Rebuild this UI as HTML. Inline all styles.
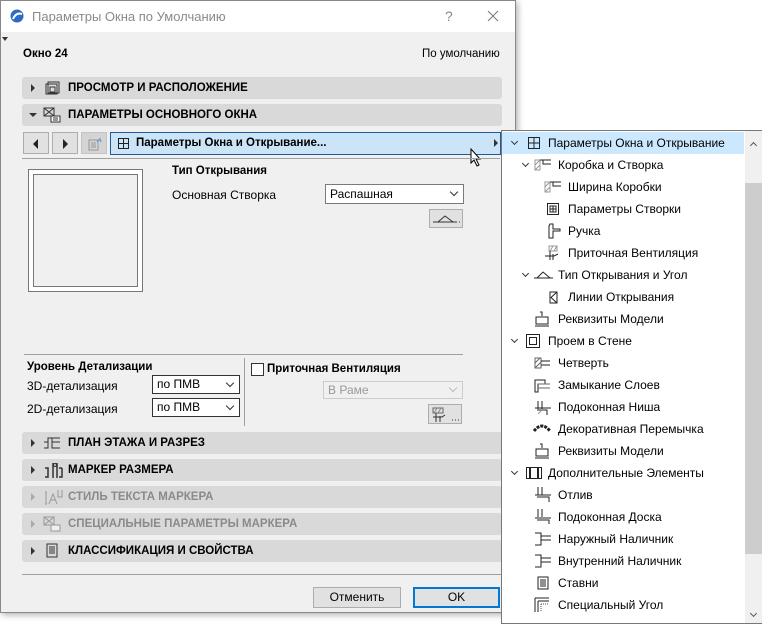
<!DOCTYPE html>
<html><head><meta charset="utf-8"><style>
*{box-sizing:border-box;margin:0;padding:0}
body{width:762px;height:624px;background:#fff;font-family:"Liberation Sans",sans-serif;font-size:12px;color:#000;position:relative;overflow:hidden}
.a{position:absolute}
#dlg{left:0;top:0;width:516px;height:613px;background:#f0f0f0;border:1px solid #888;box-shadow:2px 2px 6px rgba(0,0,0,.3)}
#title{left:0;top:0;width:514px;height:31px;background:#fff}
.bar{left:21px;width:480px;height:22px;background:#d9d9d9;border-radius:3px;font-weight:bold;font-size:11.5px;line-height:22px}
.bar .t{position:absolute;left:46px;top:0}
.bar .tri{position:absolute;left:9px;top:7px;width:0;height:0;border-left:4px solid #333;border-top:4px solid transparent;border-bottom:4px solid transparent}
.bar.dis{color:#8a8a8a}
.bar.dis .tri{border-left-color:#aaa}
.btn{background:#e1e1e1;border:1px solid #adadad}
.sel{background:#fff;border:1px solid #7a7a7a;height:21px;line-height:19px;padding-left:4px}
.chev{position:absolute;right:6px;top:5px;width:6px;height:6px;border-right:1px solid #333;border-bottom:1px solid #333;transform:rotate(45deg)}
#pop{left:501px;top:130px;width:261px;height:494px;background:#fff;border:1px solid #777}
.r{position:absolute;height:22px;line-height:22px;white-space:nowrap}
.ic{position:absolute;top:5px}
.ex{position:absolute;top:7px;width:5px;height:5px;border-right:1.3px solid #333;border-bottom:1.3px solid #333;transform:rotate(45deg)}
</style></head><body>
<div class="a" id="dlg">
 <div class="a" id="title"></div>
 <svg class="a" style="left:9px;top:8px" width="14" height="14"><circle cx="7" cy="7" r="6.5" fill="#2d6bc4"/><path d="M3 10 Q6 3 12 5" stroke="#fff" stroke-width="2" fill="none"/></svg>
 <div class="a" style="left:31px;top:8px;font-size:13px;color:#8a8a8a">Параметры Окна по Умолчанию</div>
 <div class="a" style="left:444px;top:7px;font-size:14px;color:#888">?</div>
 <svg class="a" style="left:486px;top:9px" width="12" height="12"><path d="M1 1L11 11M11 1L1 11" stroke="#777" stroke-width="1"/></svg>
 <div class="a" style="left:1px;top:36px;width:0;height:0;border-top:4px solid #333;border-left:3px solid transparent;border-right:3px solid transparent"></div>
 <div class="a" style="left:22px;top:47px;font-weight:bold;font-size:11.5px">Окно 24</div>
 <div class="a" style="left:421px;top:47px;font-size:11.5px">По умолчанию</div>

 <div class="a bar" style="top:76px"><span class="tri"></span><svg class="a" style="left:23px;top:4px" width="15" height="14"><rect x="3" y="1" width="11" height="11" fill="none" stroke="#333"/><rect x="1" y="3" width="11" height="10" fill="none" stroke="#333"/><rect x="5" y="6" width="5" height="5" fill="none" stroke="#333"/></svg><span class="t">ПРОСМОТР И РАСПОЛОЖЕНИЕ</span></div>
 <div class="a bar" style="top:103px"><span class="tri" style="left:7px;top:9px;border-left:4px solid transparent;border-right:4px solid transparent;border-top:4px solid #333;border-bottom:0"></span><svg class="a" style="left:21px;top:3px" width="18" height="16"><rect x="1" y="1" width="10" height="8" fill="none" stroke="#333"/><path d="M1 1L11 9M11 1L1 9" stroke="#333"/><rect x="8" y="9" width="9" height="6" fill="#fff" stroke="#333"/><path d="M10 11h5M10 13h5" stroke="#333"/></svg><span class="t">ПАРАМЕТРЫ ОСНОВНОГО ОКНА</span></div>

 <div class="a btn" style="left:22px;top:131px;width:26px;height:22px"><div class="a" style="left:9px;top:6px;border-right:5px solid #222;border-top:5px solid transparent;border-bottom:5px solid transparent"></div></div>
 <div class="a btn" style="left:51px;top:131px;width:26px;height:22px"><div class="a" style="left:10px;top:6px;border-left:5px solid #222;border-top:5px solid transparent;border-bottom:5px solid transparent"></div></div>
 <div class="a btn" style="left:80px;top:131px;width:26px;height:22px;background:#d4d4d4;border-color:#c4c4c4"><svg class="a" style="left:5px;top:3px" width="16" height="16"><rect x="2" y="4" width="9" height="10" fill="none" stroke="#999"/><path d="M4 7h5M4 9h5M4 11h5" stroke="#999"/><path d="M10 6l3-3 1 3" stroke="#6ea0d8" fill="none" stroke-width="1.5"/></svg></div>
 <div class="a" style="left:109px;top:131px;width:391px;height:23px;background:#cce4f7;border:1px solid #1f5a9c"><svg class="a" style="left:7px;top:5px" width="11" height="11"><rect x=".5" y=".5" width="10" height="10" fill="none" stroke="#222"/><path d="M5.5 0v11M0 5.5h11" stroke="#222"/></svg><div class="a" style="left:25px;top:4px;font-weight:bold;font-size:11.5px">Параметры Окна и Открывание...</div><div class="a" style="left:383px;top:6px;border-left:4px solid #333;border-top:4px solid transparent;border-bottom:4px solid transparent"></div></div>
 <svg class="a" style="left:469px;top:147px" width="14" height="20"><path d="M1 1v14l3-3 3 6 2-1-3-6h4z" fill="#fff" stroke="#000"/></svg>
 <div class="a" style="left:21px;top:157px;width:478px;height:1px;background:#a0a0a0"></div>

 <div class="a" style="left:27px;top:168px;width:115px;height:123px;border:1px solid #777;background:#fff"><div class="a" style="left:4px;top:4px;width:105px;height:113px;border:1px solid #777;background:#f0f0f0"></div></div>
 <div class="a" style="left:171px;top:164px;font-weight:bold;font-size:11.5px">Тип Открывания</div>
 <div class="a" style="left:171px;top:187px">Основная Створка</div>
 <div class="a sel" style="left:324px;top:183px;width:139px;height:20px;line-height:18px">Распашная<span class="chev" style="top:4px"></span></div>
 <div class="a btn" style="left:428px;top:208px;width:34px;height:19px"><svg class="a" style="left:2px;top:3px" width="30" height="12"><path d="M1 9h5M6 9l7-6 8 6h-15M21 9h3" stroke="#333" fill="none"/><path d="M24 9h1M27 9h1M30 9h1" stroke="#333"/></svg></div>

 <div class="a" style="left:23px;top:353px;width:439px;height:1px;background:#a0a0a0"></div>
 <div class="a" style="left:243px;top:357px;width:1px;height:68px;background:#a0a0a0"></div>
 <div class="a" style="left:26px;top:360px;font-weight:bold;font-size:11.5px">Уровень Детализации</div>
 <div class="a" style="left:26px;top:378px">3D-детализация</div>
 <div class="a" style="left:26px;top:401px">2D-детализация</div>
 <div class="a sel" style="left:151px;top:374px;width:88px;height:19px;line-height:17px;border-color:#333">по ПМВ<span class="chev" style="top:4px"></span></div>
 <div class="a sel" style="left:151px;top:397px;width:88px;height:19px;line-height:17px;border-color:#333">по ПМВ<span class="chev" style="top:4px"></span></div>
 <div class="a" style="left:250px;top:362px;width:13px;height:13px;background:#fff;border:1px solid #333"></div>
 <div class="a" style="left:266px;top:362px;font-weight:bold;font-size:11.5px">Приточная Вентиляция</div>
 <div class="a sel" style="left:322px;top:380px;width:140px;height:18px;line-height:16px;border-color:#ccc;color:#999;background:#f0f0f0">В Раме<span class="chev" style="border-color:#bbb;top:3px"></span></div>
 <div class="a btn" style="left:427px;top:403px;width:34px;height:20px"><svg class="a" style="left:2px;top:2px" width="30" height="16"><rect x="2" y="1" width="10" height="5" fill="none" stroke="#666"/><path d="M3 6l3-5M7 6l3-5" stroke="#888"/><path d="M5 6v9M9 9v6M2 10h9l3-2" stroke="#333" fill="none"/><path d="M21 13h1M24 13h1M27 13h1" stroke="#333"/></svg></div>

 <div class="a bar" style="top:431px"><span class="tri"></span><svg class="a" style="left:21px;top:4px" width="18" height="14"><path d="M1 12h4v-10h12M9 2v10h8M9 6h8M1 6h4" stroke="#333" fill="none"/></svg><span class="t">ПЛАН ЭТАЖА И РАЗРЕЗ</span></div>
 <div class="a bar" style="top:458px"><span class="tri"></span><svg class="a" style="left:21px;top:3px" width="20" height="16"><path d="M2 6h3v9H2M10 1v15M14 1v15M16 6h3M16 15h3v-9" stroke="#333" fill="none" stroke-width="1.5"/><circle cx="12" cy="3" r="1.5" fill="none" stroke="#333"/></svg><span class="t">МАРКЕР РАЗМЕРА</span></div>
 <div class="a bar dis" style="top:485px"><span class="tri"></span><svg class="a" style="left:21px;top:3px" width="20" height="16"><path d="M2 3h2M3 3v12M2 15h2M6 15l4-10 4 10M8 11h4M15 1v7h4V1" stroke="#999" fill="none"/></svg><span class="t">СТИЛЬ ТЕКСТА МАРКЕРА</span></div>
 <div class="a bar dis" style="top:512px"><span class="tri"></span><svg class="a" style="left:21px;top:3px" width="18" height="16"><rect x="1" y="1" width="10" height="8" fill="none" stroke="#999"/><path d="M1 1L11 9M11 1L1 9" stroke="#999"/><rect x="8" y="9" width="9" height="6" fill="#f0f0f0" stroke="#999"/></svg><span class="t">СПЕЦИАЛЬНЫЕ ПАРАМЕТРЫ МАРКЕРА</span></div>
 <div class="a bar" style="top:539px"><span class="tri"></span><svg class="a" style="left:24px;top:3px" width="14" height="16"><rect x="1" y="1" width="10" height="13" fill="none" stroke="#333"/><path d="M3 4h6M3 6h6M3 8h6M3 10h6" stroke="#333"/></svg><span class="t">КЛАССИФИКАЦИЯ И СВОЙСТВА</span></div>

 <div class="a" style="left:21px;top:573px;width:479px;height:1px;background:#a0a0a0"></div>
 <div class="a btn" style="left:312px;top:586px;width:88px;height:21px;text-align:center;line-height:19px">Отменить</div>
 <div class="a btn" style="left:412px;top:586px;width:87px;height:21px;text-align:center;line-height:17px;border:2px solid #0078d7">OK</div>
</div>

<div class="a" id="pop">
 <div class="a" style="left:0;top:1px;width:242px;height:22px;background:#cce8ff"></div>
 <div class="a" style="left:243px;top:0;width:17px;height:492px;background:#f0f0f0"></div>
 <div class="a" style="left:243px;top:52px;width:17px;height:371px;background:#cdcdcd"></div>
 <div class="a" style="left:249px;top:12px;width:5px;height:5px;border-left:1.3px solid #555;border-top:1.3px solid #555;transform:rotate(45deg)"></div>
 <div class="a" style="left:249px;top:480px;width:5px;height:5px;border-right:1.3px solid #555;border-bottom:1.3px solid #555;transform:rotate(45deg)"></div>

 <div class="r" style="top:1px;left:0"><span class="ex" style="left:10px"></span><svg class="ic" style="left:26px" width="12" height="12"><rect x=".5" y=".5" width="11" height="11" fill="none" stroke="#222"/><path d="M6 0v12M0 6h12" stroke="#222"/></svg><span style="position:absolute;left:46px">Параметры Окна и Открывание</span></div>
 <div class="r" style="top:23px"><span class="ex" style="left:21px"></span><svg class="ic" style="left:32px" width="18" height="12"><rect x="1" y="1" width="5" height="10" fill="none" stroke="#999"/><path d="M1 6l5-5M1 11l5-5" stroke="#999"/><path d="M6 1h3v4h8M9 1h8" stroke="#222" fill="none"/></svg><span style="position:absolute;left:56px">Коробка и Створка</span></div>
 <div class="r" style="top:45px"><svg class="ic" style="left:42px" width="18" height="12"><rect x="1" y="1" width="5" height="10" fill="none" stroke="#999"/><path d="M1 6l5-5M1 11l5-5" stroke="#999"/><path d="M6 1h3v4h8M9 1h8" stroke="#222" fill="none"/></svg><span style="position:absolute;left:66px">Ширина Коробки</span></div>
 <div class="r" style="top:67px"><svg class="ic" style="left:45px" width="12" height="12"><rect x=".5" y=".5" width="11" height="11" fill="none" stroke="#222"/><rect x="3" y="3" width="6" height="6" fill="none" stroke="#222"/><path d="M6 3v6M3 6h6" stroke="#222"/></svg><span style="position:absolute;left:66px">Параметры Створки</span></div>
 <div class="r" style="top:89px"><svg class="ic" style="left:45px;top:3px" width="14" height="16"><path d="M3 1h3v5h7v2H6v7H2V3z" fill="none" stroke="#222"/></svg><span style="position:absolute;left:66px">Ручка</span></div>
 <div class="r" style="top:111px"><svg class="ic" style="left:42px;top:3px" width="16" height="16"><rect x="5" y="1" width="8" height="5" fill="none" stroke="#999"/><path d="M6 6l3-5M10 6l3-5" stroke="#999"/><path d="M6 6v9M9 9v6M1 11h9l4-2" stroke="#222" fill="none"/></svg><span style="position:absolute;left:66px">Приточная Вентиляция</span></div>
 <div class="r" style="top:133px"><span class="ex" style="left:21px"></span><svg class="ic" style="left:32px" width="20" height="12"><path d="M0 9h3M3 9l6-6 7 6H3M16 9h3" stroke="#222" fill="none"/></svg><span style="position:absolute;left:56px">Тип Открывания и Угол</span></div>
 <div class="r" style="top:155px"><svg class="ic" style="left:47px" width="10" height="13"><path d="M1 1h7v11H1zM8 1L2 6.5 8 12" stroke="#222" fill="none"/></svg><span style="position:absolute;left:66px">Линии Открывания</span></div>
 <div class="r" style="top:177px"><svg class="ic" style="left:32px;top:3px" width="16" height="16"><path d="M6 1h2v4M2 6h12v7H2zM1 15h14" stroke="#222" fill="none"/></svg><span style="position:absolute;left:56px">Реквизиты Модели</span></div>
 <div class="r" style="top:199px"><span class="ex" style="left:10px"></span><svg class="ic" style="left:24px;top:4px" width="14" height="14"><rect x=".5" y=".5" width="13" height="13" fill="none" stroke="#222"/><rect x="3.5" y="3.5" width="7" height="7" fill="none" stroke="#222"/></svg><span style="position:absolute;left:46px">Проем в Стене</span></div>
 <div class="r" style="top:221px"><svg class="ic" style="left:32px" width="18" height="12"><rect x="1" y="1" width="6" height="10" fill="none" stroke="#666"/><path d="M1 6l5-5M1 11l6-6" stroke="#666"/><path d="M7 4h9M7 8h9" stroke="#222"/></svg><span style="position:absolute;left:56px">Четверть</span></div>
 <div class="r" style="top:243px"><svg class="ic" style="left:32px" width="18" height="14"><path d="M1 1h10v4H4v8H1z" fill="none" stroke="#222"/><path d="M4 5h12M4 9h12" stroke="#666"/></svg><span style="position:absolute;left:56px">Замыкание Слоев</span></div>
 <div class="r" style="top:265px"><svg class="ic" style="left:32px" width="18" height="14"><path d="M4 0v8M8 0v8M1 7h16M3 9h10v5" stroke="#222" fill="none"/><path d="M4 13l4-4" stroke="#999"/></svg><span style="position:absolute;left:56px">Подоконная Ниша</span></div>
 <div class="r" style="top:287px"><svg class="ic" style="left:31px" width="18" height="10"><path d="M1 8Q9-2 17 8" stroke="#222" fill="none" stroke-width="3" stroke-dasharray="3 1"/></svg><span style="position:absolute;left:56px">Декоративная Перемычка</span></div>
 <div class="r" style="top:309px"><svg class="ic" style="left:32px;top:3px" width="16" height="16"><path d="M6 1h2v4M2 6h12v7H2zM1 15h14" stroke="#222" fill="none"/></svg><span style="position:absolute;left:56px">Реквизиты Модели</span></div>
 <div class="r" style="top:331px"><span class="ex" style="left:10px"></span><svg class="ic" style="left:24px" width="16" height="12"><rect x=".5" y=".5" width="15" height="11" fill="none" stroke="#222"/><path d="M4 0v12M12 0v12" stroke="#222" stroke-width="2"/></svg><span style="position:absolute;left:46px">Дополнительные Элементы</span></div>
 <div class="r" style="top:353px"><svg class="ic" style="left:32px;top:3px" width="18" height="16"><path d="M4 0v8M8 0v8M1 8h16M3 10h12v5" stroke="#222" fill="none"/></svg><span style="position:absolute;left:56px">Отлив</span></div>
 <div class="r" style="top:375px"><svg class="ic" style="left:32px;top:3px" width="18" height="16"><path d="M4 0v8M8 0v8M1 9h16M3 11h12v4" stroke="#222" fill="none"/></svg><span style="position:absolute;left:56px">Подоконная Доска</span></div>
 <div class="r" style="top:397px"><svg class="ic" style="left:32px;top:3px" width="18" height="16"><path d="M1 2h6v12H1M7 5h10M7 9h10" stroke="#222" fill="none"/></svg><span style="position:absolute;left:56px">Наружный Наличник</span></div>
 <div class="r" style="top:419px"><svg class="ic" style="left:32px;top:3px" width="18" height="16"><path d="M1 2h6v12H1M7 5h10M7 9h10" stroke="#222" fill="none"/></svg><span style="position:absolute;left:56px">Внутренний Наличник</span></div>
 <div class="r" style="top:441px"><svg class="ic" style="left:35px;top:4px" width="12" height="14"><rect x="1" y="1" width="10" height="12" fill="none" stroke="#222"/><path d="M3 4h6M3 6h6M3 8h6M3 10h6" stroke="#222"/></svg><span style="position:absolute;left:56px">Ставни</span></div>
 <div class="r" style="top:463px"><svg class="ic" style="left:32px;top:3px" width="16" height="16"><path d="M1 1h14M1 1v14M4 4h11M4 4v11" stroke="#222" fill="none"/><path d="M7 7v8M7 7h8" stroke="#555" stroke-dasharray="1 1"/></svg><span style="position:absolute;left:56px">Специальный Угол</span></div>
</div>
</body></html>
